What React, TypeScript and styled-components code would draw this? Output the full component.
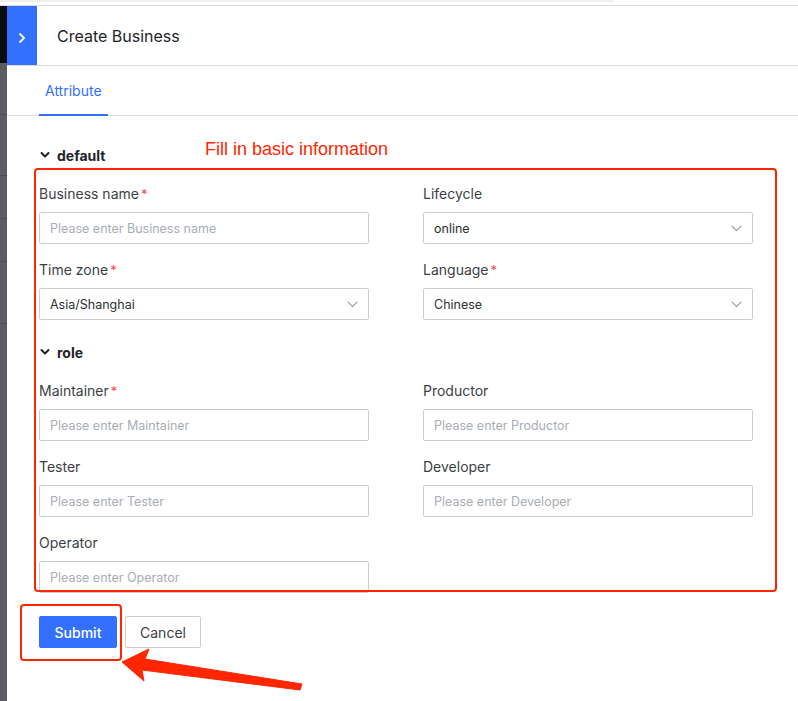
import React from "react";
import styled, { createGlobalStyle } from "styled-components";

const Global = createGlobalStyle`
  html, body { margin: 0; padding: 0; background: #fff; }
  body { font-family: Inter, "Noto Sans", sans-serif; -webkit-font-smoothing: antialiased; }
  * { box-sizing: border-box; }
`;

const Page = styled.div`
  position: relative;
  width: 798px;
  height: 701px;
  overflow: hidden;
  background: #fff;
  display: flex;
  flex-direction: column;
`;

const TopStrip = styled.div`
  height: 6px;
  border-bottom: 1px solid #dcdcdc;
  display: flex;
  align-items: flex-start;
`;

const TopScroll = styled.div`
  width: 613px;
  height: 2px;
  background: #f0f0f0;
`;

const Body = styled.div`
  flex: 1;
  display: flex;
  min-height: 0;
`;

const Backdrop = styled.div`
  width: 7px;
  display: flex;
  flex-direction: column;
`;

const BackdropBlock = styled.div<{ $h: number; $dark?: boolean }>`
  height: ${(p) => p.$h}px;
  flex-shrink: 0;
  background: ${(p) => (p.$dark ? "#0a0c10" : "#5c5d60")};
  border-bottom: ${(p) => (p.$dark ? "none" : "1px solid #4c4d50")};
`;

const Drawer = styled.div`
  flex: 1;
  display: flex;
  flex-direction: column;
`;

const Header = styled.div`
  height: 60px;
  display: flex;
  align-items: center;
  border-bottom: 1px solid #dcdcdc;
`;

const Toggle = styled.div`
  width: 30px;
  align-self: stretch;
  background: #3370ff;
  display: flex;
  align-items: center;
  justify-content: center;
  padding-top: 4px;
`;

const Title = styled.div`
  margin-left: 20px;
  font-size: 16px;
  color: #1f2329;
  font-weight: 400;
  margin-top: 1px;
`;

const Tabs = styled.div`
  height: 50px;
  display: flex;
  align-items: stretch;
  padding-left: 32px;
  border-bottom: 1px solid #dcdcdc;
`;

const Tab = styled.div<{ $active?: boolean }>`
  padding: 0 6px;
  display: flex;
  align-items: center;
  font-size: 14px;
  color: ${(p) => (p.$active ? "#3370ff" : "#1f2329")};
  border-bottom: 2px solid ${(p) => (p.$active ? "#3370ff" : "transparent")};
  margin-bottom: -1px;
  padding-top: 1px;
`;

const Content = styled.div`
  padding: 28px 0 0 32px;
  display: flex;
  flex-direction: column;
`;

const SectionHeader = styled.div<{ $top?: number }>`
  height: 22px;
  display: flex;
  align-items: center;
  gap: 7px;
  margin-top: ${(p) => p.$top ?? 0}px;
  margin-bottom: 17px;
  font-size: 14px;
  font-weight: 700;
  color: #1f2329;
  padding-left: 1px;
`;

const Grid = styled.div`
  display: grid;
  grid-template-columns: 330px 330px;
  column-gap: 54px;
  row-gap: 15px;
`;

const Field = styled.div`
  display: flex;
  flex-direction: column;
`;

const Label = styled.div`
  height: 22px;
  line-height: 22px;
  font-size: 14px;
  color: #3b3f46;
  margin-bottom: 7px;
`;

const Star = styled.span`
  color: #f54a45;
  margin-left: 2px;
  font-size: 13px;
`;

const Input = styled.div<{ $placeholder?: boolean }>`
  height: 32px;
  border: 1px solid #c9cdd4;
  border-radius: 2px;
  padding: 0 10px;
  display: flex;
  align-items: center;
  justify-content: space-between;
  font-size: 12.5px;
  color: ${(p) => (p.$placeholder ? "#a8adb6" : "#2b2f36")};
`;

const Buttons = styled.div`
  display: flex;
  gap: 8px;
  margin-top: 23px;
`;

const Button = styled.div<{ $primary?: boolean; $w: number }>`
  width: ${(p) => p.$w}px;
  height: 32px;
  display: flex;
  align-items: center;
  justify-content: center;
  font-size: 14px;
  border-radius: 2px;
  font-weight: ${(p) => (p.$primary ? 500 : 400)};
  background: ${(p) => (p.$primary ? "#3370ff" : "#fff")};
  color: ${(p) => (p.$primary ? "#fff" : "#3b3f46")};
  border: 1px solid ${(p) => (p.$primary ? "#3370ff" : "#c9cdd4")};
`;

const AnnotText = styled.div`
  position: absolute;
  left: 205px;
  top: 139px;
  font-family: "Liberation Sans", Arial, sans-serif;
  font-size: 18px;
  color: #ff2600;
  white-space: nowrap;
`;

const AnnotBox = styled.div<{ $l: number; $t: number; $w: number; $h: number }>`
  position: absolute;
  left: ${(p) => p.$l}px;
  top: ${(p) => p.$t}px;
  width: ${(p) => p.$w}px;
  height: ${(p) => p.$h}px;
  border: 2.5px solid #ff2600;
  border-radius: 4px;
  pointer-events: none;
`;

const ArrowSvg = styled.svg`
  position: absolute;
  left: 0;
  top: 0;
  pointer-events: none;
`;

const Chevron = ({ color = "#fff" }: { color?: string }) => (
  <svg width="8" height="12" viewBox="0 0 8 12">
    <path d="M2 2 L6 6 L2 10" fill="none" stroke={color} strokeWidth="1.8" strokeLinecap="round" strokeLinejoin="round" />
  </svg>
);

const CaretDown = () => (
  <svg width="10" height="8" viewBox="0 0 10 8">
    <path d="M1.5 2 L5 5.5 L8.5 2" fill="none" stroke="#1f2329" strokeWidth="2" strokeLinecap="round" strokeLinejoin="round" />
  </svg>
);

const SelectArrow = () => (
  <svg width="11" height="7" viewBox="0 0 11 7">
    <path d="M1 1.2 L5.5 5.7 L10 1.2" fill="none" stroke="#8f959e" strokeWidth="1.1" strokeLinecap="round" strokeLinejoin="round" />
  </svg>
);

type F = { label: string; required?: boolean; value?: string; select?: boolean };

const FieldView = ({ label, required, value, select }: F) => (
  <Field>
    <Label>
      {label}
      {required && <Star>*</Star>}
    </Label>
    <Input $placeholder={!value}>
      <span>{value ?? `Please enter ${label}`}</span>
      {select && <SelectArrow />}
    </Input>
  </Field>
);

const defaults: F[] = [
  { label: "Business name", required: true },
  { label: "Lifecycle", value: "online", select: true },
  { label: "Time zone", required: true, value: "Asia/Shanghai", select: true },
  { label: "Language", required: true, value: "Chinese", select: true },
];

const roles: F[] = [
  { label: "Maintainer", required: true },
  { label: "Productor" },
  { label: "Tester" },
  { label: "Developer" },
  { label: "Operator" },
];

export default function App() {
  return (
    <>
      <Global />
      <Page>
        <TopStrip>
          <TopScroll />
        </TopStrip>
        <Body>
          <Backdrop>
            <BackdropBlock $h={57} $dark />
            <BackdropBlock $h={52} />
            <BackdropBlock $h={61} />
            <BackdropBlock $h={43} />
            <BackdropBlock $h={43} />
            <BackdropBlock $h={62} />
            <BackdropBlock $h={400} />
          </Backdrop>
          <Drawer>
            <Header>
              <Toggle>
                <Chevron />
              </Toggle>
              <Title>Create Business</Title>
            </Header>
            <Tabs>
              <Tab $active>Attribute</Tab>
            </Tabs>
            <Content>
              <SectionHeader>
                <CaretDown />
                default
              </SectionHeader>
              <Grid>
                {defaults.map((f) => (
                  <FieldView key={f.label} {...f} />
                ))}
              </Grid>
              <SectionHeader $top={21}>
                <CaretDown />
                role
              </SectionHeader>
              <Grid>
                {roles.map((f) => (
                  <FieldView key={f.label} {...f} />
                ))}
              </Grid>
              <Buttons>
                <Button $primary $w={78}>Submit</Button>
                <Button $w={76}>Cancel</Button>
              </Buttons>
            </Content>
          </Drawer>
        </Body>
        <AnnotText>Fill in basic information</AnnotText>
        <AnnotBox $l={34} $t={168} $w={743} $h={424} />
        <AnnotBox $l={20} $t={604} $w={102} $h={57} />
        <ArrowSvg width="798" height="701" viewBox="0 0 798 701">
          <polygon points="122,662 149,649 145,659 302,684 300,690 142,670 144,681" fill="#ff2600" stroke="#ff2600" strokeWidth="1" strokeLinejoin="round" />
        </ArrowSvg>
      </Page>
    </>
  );
}
